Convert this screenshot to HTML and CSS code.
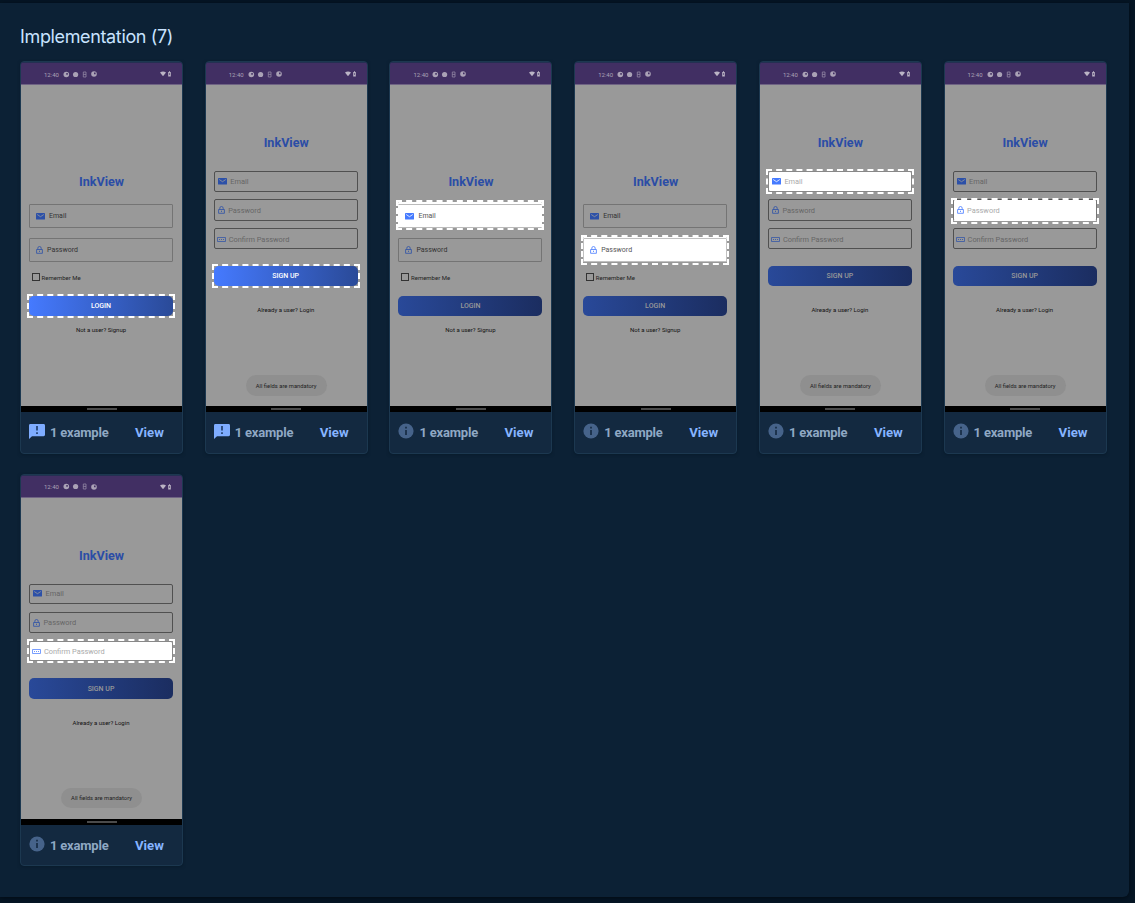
FILE: index.html
```
<!DOCTYPE html>
<html lang="en">
<head>
<meta charset="utf-8">
<title>Implementation</title>
<link rel="stylesheet" href="styles.css">
</head>
<body>
<svg class="defs" aria-hidden="true">
  <symbol id="mail" viewBox="0 0 9 7"><rect width="9" height="6.6" rx=".7" fill="currentColor"/><path d="M1.2 1.5 4.5 3.7 7.8 1.5" fill="none" stroke="var(--mark)" stroke-width=".8"/></symbol>
  <symbol id="lock" viewBox="0 0 7 8"><path d="M1.8 3.3V2.2a1.7 1.7 0 0 1 3.4 0v1.1M.6 3.5h5.8v3.8H.6zM3.5 4.7v1.3" fill="none" stroke="currentColor" stroke-width=".8"/></symbol>
  <symbol id="pin" viewBox="0 0 9 5"><rect x=".4" y=".4" width="8.2" height="4.2" rx=".5" fill="none" stroke="currentColor" stroke-width=".8"/><path d="M2 2.5h1M4 2.5h1M6 2.5h1" stroke="currentColor" stroke-width=".8"/></symbol>
  <symbol id="status" viewBox="0 0 32 7"><g fill="#aaa2b6"><circle cx="3.3" cy="3.5" r="2.8"/><circle cx="12.6" cy="3.5" r="2.6"/></g><path d="M3.3 2h1.5v1.8H3.3z" fill="#412f63"/><path d="M20.3 1h2.7v5h-2.7zM20.3 3.4h2.7" fill="none" stroke="#9388a5" stroke-width=".8"/></symbol>
  <symbol id="disc" viewBox="0 0 6 6"><circle cx="3" cy="3" r="2.8" fill="#aaa2b6"/><path d="M3 1.6h1.6v1.7H3z" fill="#412f63"/></symbol>
  <symbol id="signal" viewBox="0 0 12 6"><path d="M0 1.6Q3 -.6 6 1.6L3 5.3z" fill="#bbb4c5"/><path d="M8.2 1h.8V.3h1V1h.8v4.6H8.2z" fill="#bbb4c5"/><path d="M9.5 2v2" stroke="#412f63" stroke-width=".6"/></symbol>
  <symbol id="feedback" viewBox="0 0 16 15"><path d="M1.4 0h13.2Q16 0 16 1.4v9.4q0 1.4-1.4 1.4H3L0 15V1.4Q0 0 1.4 0z" fill="#7eacff"/><path d="M8 2v4.6M8 8.2v1.7" stroke="#15305a" stroke-width="1.5"/></symbol>
  <symbol id="info" viewBox="0 0 16 16"><circle cx="8" cy="8" r="7.6" fill="#46638a"/><path d="M8 3.8v1.7M8 7v5" stroke="#13283f" stroke-width="1.6"/></symbol>
</svg>
<main class="panel">
  <h1 class="title">Implementation (7)</h1>
  <div class="cards">

    <article class="card">
      <div class="status"><span>12:40</span><svg class="status-icons"><use href="#status"/></svg><svg class="disc"><use href="#disc"/></svg><svg class="signal"><use href="#signal"/></svg></div>
      <div class="screen login">
        <div class="brand">InkView</div>
        <div class="field email"><svg class="mail"><use href="#mail"/></svg><span>Email</span></div>
        <div class="field password"><svg class="lock"><use href="#lock"/></svg><span>Password</span></div>
        <div class="remember"><i></i><span>Remember Me</span></div>
        <div class="button lit"><span>LOGIN</span></div>
        <div class="switch">Not a user? Signup</div>
      </div>
      <div class="nav"><i></i></div>
      <footer class="foot"><svg class="feedback"><use href="#feedback"/></svg><span class="count">1 example</span><a class="view">View</a></footer>
    </article>

    <article class="card">
      <div class="status"><span>12:40</span><svg class="status-icons"><use href="#status"/></svg><svg class="disc"><use href="#disc"/></svg><svg class="signal"><use href="#signal"/></svg></div>
      <div class="screen signup">
        <div class="brand">InkView</div>
        <div class="field email"><svg class="mail"><use href="#mail"/></svg><span>Email</span></div>
        <div class="field password"><svg class="lock"><use href="#lock"/></svg><span>Password</span></div>
        <div class="field confirm"><svg class="pin"><use href="#pin"/></svg><span>Confirm Password</span></div>
        <div class="button lit"><span>SIGN UP</span></div>
        <div class="switch">Already a user? Login</div>
        <div class="toast"><span>All fields are mandatory</span></div>
      </div>
      <div class="nav"><i></i></div>
      <footer class="foot"><svg class="feedback"><use href="#feedback"/></svg><span class="count">1 example</span><a class="view">View</a></footer>
    </article>

    <article class="card">
      <div class="status"><span>12:40</span><svg class="status-icons"><use href="#status"/></svg><svg class="disc"><use href="#disc"/></svg><svg class="signal"><use href="#signal"/></svg></div>
      <div class="screen login">
        <div class="brand">InkView</div>
        <div class="field email lit"><svg class="mail"><use href="#mail"/></svg><span>Email</span></div>
        <div class="field password"><svg class="lock"><use href="#lock"/></svg><span>Password</span></div>
        <div class="remember"><i></i><span>Remember Me</span></div>
        <div class="button"><span>LOGIN</span></div>
        <div class="switch">Not a user? Signup</div>
      </div>
      <div class="nav"><i></i></div>
      <footer class="foot"><svg class="info"><use href="#info"/></svg><span class="count">1 example</span><a class="view">View</a></footer>
    </article>

    <article class="card">
      <div class="status"><span>12:40</span><svg class="status-icons"><use href="#status"/></svg><svg class="disc"><use href="#disc"/></svg><svg class="signal"><use href="#signal"/></svg></div>
      <div class="screen login">
        <div class="brand">InkView</div>
        <div class="field email"><svg class="mail"><use href="#mail"/></svg><span>Email</span></div>
        <div class="field password lit"><svg class="lock"><use href="#lock"/></svg><span>Password</span></div>
        <div class="remember"><i></i><span>Remember Me</span></div>
        <div class="button"><span>LOGIN</span></div>
        <div class="switch">Not a user? Signup</div>
      </div>
      <div class="nav"><i></i></div>
      <footer class="foot"><svg class="info"><use href="#info"/></svg><span class="count">1 example</span><a class="view">View</a></footer>
    </article>

    <article class="card">
      <div class="status"><span>12:40</span><svg class="status-icons"><use href="#status"/></svg><svg class="disc"><use href="#disc"/></svg><svg class="signal"><use href="#signal"/></svg></div>
      <div class="screen signup">
        <div class="brand">InkView</div>
        <div class="field email lit"><svg class="mail"><use href="#mail"/></svg><span>Email</span></div>
        <div class="field password"><svg class="lock"><use href="#lock"/></svg><span>Password</span></div>
        <div class="field confirm"><svg class="pin"><use href="#pin"/></svg><span>Confirm Password</span></div>
        <div class="button"><span>SIGN UP</span></div>
        <div class="switch">Already a user? Login</div>
        <div class="toast"><span>All fields are mandatory</span></div>
      </div>
      <div class="nav"><i></i></div>
      <footer class="foot"><svg class="info"><use href="#info"/></svg><span class="count">1 example</span><a class="view">View</a></footer>
    </article>

    <article class="card">
      <div class="status"><span>12:40</span><svg class="status-icons"><use href="#status"/></svg><svg class="disc"><use href="#disc"/></svg><svg class="signal"><use href="#signal"/></svg></div>
      <div class="screen signup">
        <div class="brand">InkView</div>
        <div class="field email"><svg class="mail"><use href="#mail"/></svg><span>Email</span></div>
        <div class="field password lit"><svg class="lock"><use href="#lock"/></svg><span>Password</span></div>
        <div class="field confirm"><svg class="pin"><use href="#pin"/></svg><span>Confirm Password</span></div>
        <div class="button"><span>SIGN UP</span></div>
        <div class="switch">Already a user? Login</div>
        <div class="toast"><span>All fields are mandatory</span></div>
      </div>
      <div class="nav"><i></i></div>
      <footer class="foot"><svg class="info"><use href="#info"/></svg><span class="count">1 example</span><a class="view">View</a></footer>
    </article>

    <article class="card">
      <div class="status"><span>12:40</span><svg class="status-icons"><use href="#status"/></svg><svg class="disc"><use href="#disc"/></svg><svg class="signal"><use href="#signal"/></svg></div>
      <div class="screen signup">
        <div class="brand">InkView</div>
        <div class="field email"><svg class="mail"><use href="#mail"/></svg><span>Email</span></div>
        <div class="field password"><svg class="lock"><use href="#lock"/></svg><span>Password</span></div>
        <div class="field confirm lit"><svg class="pin"><use href="#pin"/></svg><span>Confirm Password</span></div>
        <div class="button"><span>SIGN UP</span></div>
        <div class="switch">Already a user? Login</div>
        <div class="toast"><span>All fields are mandatory</span></div>
      </div>
      <div class="nav"><i></i></div>
      <footer class="foot"><svg class="info"><use href="#info"/></svg><span class="count">1 example</span><a class="view">View</a></footer>
    </article>

  </div>
</main>
</body>
</html>
```
FILE: styles.css
```
* { box-sizing: border-box; }
body { margin: 0; height: 903px; overflow: hidden; background: #051524; padding-top: 3px; font-family: Roboto, sans-serif; }
svg { display: block; flex: none; }
.defs { position: absolute; width: 0; height: 0; }
.panel { width: 1129px; height: 894px; padding: 21px 0 0 20px; background: #0c2135; border-radius: 0 0 6px 0; box-shadow: 0 1px 4px #020b14; }
.title { margin: 0 0 13px; height: 24px; font: 400 18px/26px Inter, sans-serif; letter-spacing: -.36px; color: #c8e3ff; white-space: nowrap; }
.cards { display: grid; grid-template-columns: repeat(6, 163px); column-gap: 21.72px; row-gap: 20px; }
.card { height: 392.5px; display: flex; flex-direction: column; overflow: hidden; border: 1px solid #1c3850; border-radius: 4px; background: #132940; box-shadow: 0 1px 3px #06152480; }

.status { height: 23px; flex: none; display: flex; align-items: center; padding: 1px 9px 0 23px; background: #412f63; border-top: 1px solid #243052; border-bottom: 1px solid #6f6384; font-size: 6px; color: #aaa2b6; }
.status span { width: 19px; letter-spacing: 0; }
.status-icons { width: 32px; height: 7px; margin-right: -5px; overflow: hidden; }
.disc { width: 6px; height: 6px; margin-left: 1px; margin-right: auto; overflow: hidden; }
.signal { width: 12px; height: 6px; margin-right: 1px; }

.screen { --mark: #999; height: 321px; flex: none; display: flex; flex-direction: column; align-items: flex-start; padding-left: 8px; background: #999; color: #111; }
.screen > * { flex: none; }
.brand { width: 145px; text-align: center; font: 700 12.6px/16px Roboto, sans-serif; color: #2b4da6; }
.field { position: relative; width: 144px; display: flex; align-items: center; color: #333; border: 1px solid #747474; border-radius: 1px; font-size: 7px; }
.field svg { color: #2c50a8; }
.mail { width: 9px; height: 7px; }
.lock { width: 7px; height: 8px; }
.pin { width: 9px; height: 5px; }
.button { position: relative; width: 144px; height: 20.5px; padding-top: 1px; display: flex; align-items: center; justify-content: center; border-radius: 5px; background: linear-gradient(90deg, #294999, #1b2d60); color: #999; font-size: 7px; font-weight: 500; }
.switch { width: 144px; text-align: center; font-size: 6px; line-height: 8px; color: #111; }

.login .brand { margin-top: 89px; }
.login .email { margin-top: 14px; height: 24px; padding-left: 6px; gap: 4px; }
.login .password { margin-top: 10px; height: 23.5px; padding-left: 6px; gap: 4px; }
.remember { height: 8px; margin: 11.5px 0 0 2.6px; display: flex; align-items: center; gap: 2px; font-size: 6px; color: #222; }
.remember i { width: 8px; height: 8px; border: 1px solid #333; }
.login .button { margin-top: 14.7px; }
.login .switch { margin-top: 10.3px; }

.signup .brand { margin-top: 50px; }
.signup .field { height: 20.7px; border-color: #505050; border-radius: 2px; padding-left: 3px; gap: 3.5px; color: #666; font-size: 7.4px; }
.signup .email { margin-top: 20px; }
.signup .password { margin-top: 7.6px; height: 21.4px; padding-top: 1px; }
.signup .confirm { margin-top: 7.6px; padding-top: 1px; padding-left: 2px; gap: 3px; }
.signup .button { margin-top: 16.7px; }
.signup .switch { margin-top: 20px; }
.toast { width: 81px; height: 20.7px; margin: 61px 0 0 32px; padding-top: 1px; border-radius: 11px; background: #8f8f8f; display: flex; align-items: center; justify-content: center; font-size: 5.8px; color: #222; white-space: nowrap; }

.screen .lit::after { content: ""; position: absolute; inset: -3px; border: 2px dashed #fff; }
.button.lit { background: linear-gradient(90deg, #457aff, #2a4a98); color: #fff; }
.screen .button.lit::after { inset: -2px; }
.field.lit { --mark: #fff; background: #fff; border-color: #c0c0c0; color: #555; }
.field.lit svg { color: #457aff; }
.login .email.lit { border-color: #bbb #fff; box-shadow: 0 -2px #fff; }
.login .password.lit { box-shadow: 0 -1px #fff; }
.login .email.lit::after { inset: -5px -3px -3px; }
.login .password.lit::after { inset: -4px -3px; }
.signup .field.lit { border-color: #888; color: #aaa; }
.signup .password.lit { border-color: #555 #777 #fff; }
.signup .password.lit::after { inset: -2px -3px -4px; }

.nav { height: 6px; flex: none; display: flex; align-items: center; justify-content: center; background: #000; }
.nav i { width: 30px; height: 2px; background: #4b4b4b; }
.foot { flex: 1; display: flex; align-items: flex-start; padding-left: 8px; line-height: 18px; font-weight: 700; }
.feedback { width: 16px; height: 15px; margin-top: 12px; }
.info { width: 16px; height: 16px; margin-top: 11px; }
.count { margin: 12px 0 0 5px; width: 85px; color: #8fa8c4; font-size: 13px; letter-spacing: -.2px; white-space: nowrap; }
.view { margin-top: 12px; color: #86b4ff; font-size: 13.2px; }
```
